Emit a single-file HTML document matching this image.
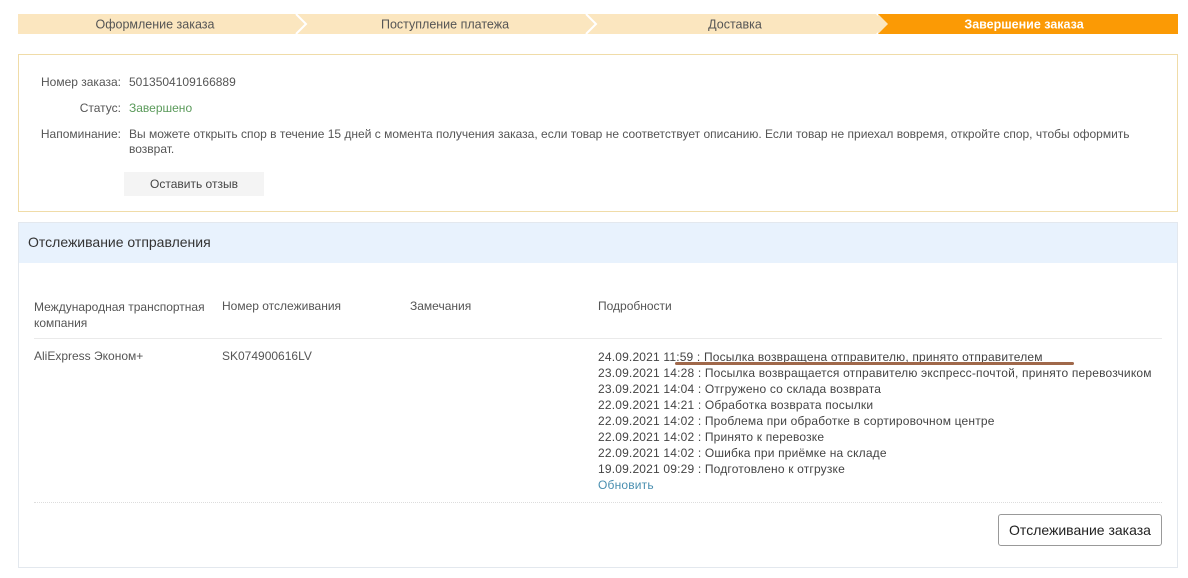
<!DOCTYPE html>
<html><head><meta charset="utf-8"><style>
body{margin:0;background:#fff;font-family:"Liberation Sans",sans-serif;font-size:12px;color:#333;width:1188px;height:578px;position:relative;overflow:hidden}
.a{position:absolute;white-space:nowrap}
.n{letter-spacing:0}
</style></head><body>
<svg class="a" style="left:18px;top:14px" width="1160" height="20">
<rect x="0" y="0" width="860" height="20" fill="#fbe6bf"/>
<rect x="860" y="0" width="300" height="20" fill="#fb9a05"/>
<polyline points="278,0 288,10 278,20" fill="none" stroke="#fff" stroke-width="2"/>
<polyline points="568,0 578,10 568,20" fill="none" stroke="#fff" stroke-width="2"/>
<polygon points="858,0 868,10 858,20 860,20 860,0" fill="#fff"/>
<polygon points="860,0 870,10 860,20" fill="#fbe6bf"/>
<text x="137" y="14.5" text-anchor="middle" font-size="12.5" fill="#555" font-family="Liberation Sans">Оформление заказа</text>
<text x="427" y="14.5" text-anchor="middle" font-size="12.5" fill="#555" font-family="Liberation Sans">Поступление платежа</text>
<text x="717" y="14.5" text-anchor="middle" font-size="12.5" fill="#555" font-family="Liberation Sans">Доставка</text>
<text x="1006" y="14.5" text-anchor="middle" font-size="12.5" fill="#fff" font-weight="bold" font-family="Liberation Sans">Завершение заказа</text>
</svg>
<div class="a" style="left:18px;top:54px;width:1158px;height:156px;border:1px solid #f0dca8"></div>
<div class="a n" style="left:0;width:121px;text-align:right;top:75px;color:#555">Номер заказа:</div>
<div class="a n" style="left:129px;top:75px;color:#555">5013504109166889</div>
<div class="a n" style="left:0;width:121px;text-align:right;top:101px;color:#555">Статус:</div>
<div class="a n" style="left:129px;top:101px;color:#5a9a5a">Завершено</div>
<div class="a n" style="left:0;width:121px;text-align:right;top:127px;color:#555">Напоминание:</div>
<div class="a n" style="left:129px;top:127px;color:#555">Вы можете открыть спор в течение 15 дней с момента получения заказа, если товар не соответствует описанию. Если товар не приехал вовремя, откройте спор, чтобы оформить</div>
<div class="a n" style="left:129px;top:142px;color:#555">возврат.</div>
<div class="a" style="left:124px;top:172px;width:140px;height:24px;background:#f4f4f4;text-align:center;line-height:24px;color:#444">Оставить отзыв</div>

<div class="a" style="left:18px;top:222px;width:1158px;height:344px;border:1px solid #e3e8ee"></div>
<div class="a" style="left:19px;top:223px;width:1158px;height:40px;background:#e8f2fd"></div>
<div class="a" style="left:28px;top:234px;font-size:14px;color:#333">Отслеживание отправления</div>
<div class="a n" style="left:34px;top:299px;color:#555;line-height:16px">Международная транспортная<br>компания</div>
<div class="a n" style="left:222px;top:299px;color:#555">Номер отслеживания</div>
<div class="a n" style="left:410px;top:299px;color:#555">Замечания</div>
<div class="a n" style="left:598px;top:299px;color:#555">Подробности</div>
<div class="a" style="left:34px;top:338px;width:1128px;border-top:1px solid #eaeaea"></div>
<div class="a n" style="left:34px;top:349px;color:#555">AliExpress Эконом+</div>
<div class="a n" style="left:222px;top:349px;color:#555">SK074900616LV</div>
<div class="a" style="left:598px;top:349px;color:#444;line-height:16px;letter-spacing:0.18px">24.09.2021 11:59 : Посылка возвращена отправителю, принято отправителем<br>23.09.2021 14:28 : Посылка возвращается отправителю экспресс-почтой, принято перевозчиком<br>23.09.2021 14:04 : Отгружено со склада возврата<br>22.09.2021 14:21 : Обработка возврата посылки<br>22.09.2021 14:02 : Проблема при обработке в сортировочном центре<br>22.09.2021 14:02 : Принято к перевозке<br>22.09.2021 14:02 : Ошибка при приёмке на складе<br>19.09.2021 09:29 : Подготовлено к отгрузке<br><span style="color:#4a8fb0">Обновить</span></div>
<div class="a" style="left:675px;top:362px;width:399px;height:3px;background:#a0684a;border-radius:2px"></div>
<div class="a" style="left:34px;top:502px;width:1128px;border-top:1px dotted #ddd"></div>
<div class="a" style="left:998px;top:514px;width:162px;height:30px;border:1px solid #999;border-radius:3px;text-align:center;line-height:30px;font-size:14px;color:#222">Отслеживание заказа</div>
</body></html>
